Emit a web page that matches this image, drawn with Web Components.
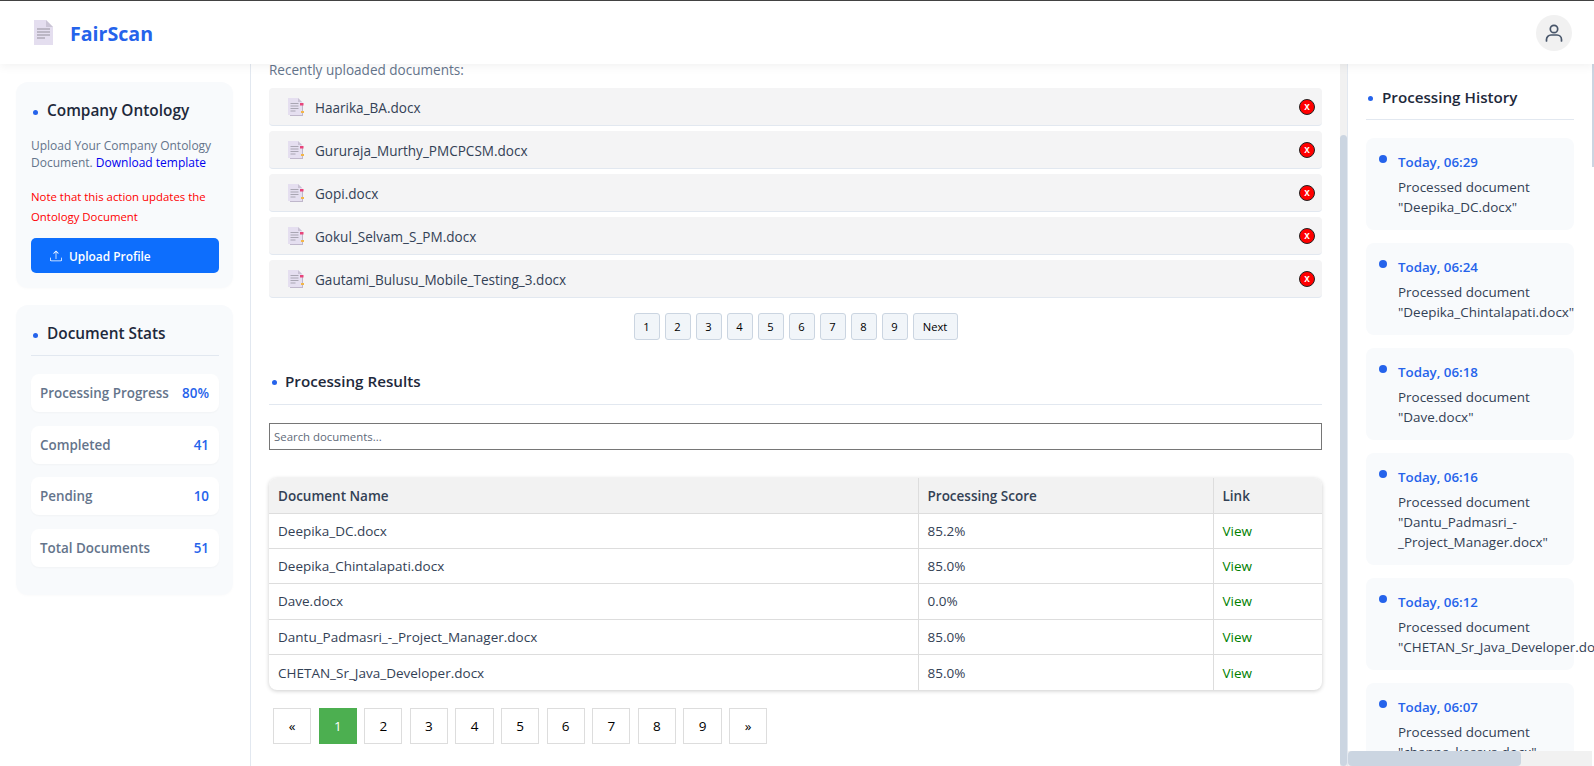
<!DOCTYPE html>
<html lang="en">
<head>
<meta charset="utf-8">
<title>FairScan</title>
<style>
  html, body { margin: 0; height: 100%; overflow: hidden; background: #fff; }
  body { font-family: "Open Sans", "Noto Sans", sans-serif; color: #334155; }
</style>
</head>
<body>
<fs-app>
  <fs-header slot="header"></fs-header>

  <fs-sidebar slot="left">
    <fs-card>
      <fs-title>Company Ontology</fs-title>
      <fs-ontology></fs-ontology>
    </fs-card>
    <fs-card>
      <fs-title ruled>Document Stats</fs-title>
      <fs-stat label="Processing Progress" value="80%"></fs-stat>
      <fs-stat label="Completed" value="41"></fs-stat>
      <fs-stat label="Pending" value="10"></fs-stat>
      <fs-stat label="Total Documents" value="51"></fs-stat>
    </fs-card>
  </fs-sidebar>

  <fs-main slot="center">
    <fs-uploads>
      <fs-doc name="Haarika_BA.docx"></fs-doc>
      <fs-doc name="Gururaja_Murthy_PMCPCSM.docx"></fs-doc>
      <fs-doc name="Gopi.docx"></fs-doc>
      <fs-doc name="Gokul_Selvam_S_PM.docx"></fs-doc>
      <fs-doc name="Gautami_Bulusu_Mobile_Testing_3.docx"></fs-doc>
    </fs-uploads>
    <fs-results></fs-results>
  </fs-main>

  <fs-history slot="right">
    <fs-history-item time="Today, 06:29" doc="Deepika_DC.docx"></fs-history-item>
    <fs-history-item time="Today, 06:24" doc="Deepika_Chintalapati.docx"></fs-history-item>
    <fs-history-item time="Today, 06:18" doc="Dave.docx"></fs-history-item>
    <fs-history-item time="Today, 06:16" doc="Dantu_Padmasri_-_Project_Manager.docx"></fs-history-item>
    <fs-history-item time="Today, 06:12" doc="CHETAN_Sr_Java_Developer.docx"></fs-history-item>
    <fs-history-item time="Today, 06:07" doc="channa_kesava.docx"></fs-history-item>
  </fs-history>
</fs-app>

<script>
const DOC_ICON = `<svg width="16" height="18" viewBox="0 0 16 18" aria-hidden="true">
  <path d="M2 1.500h9l4 4V18H2z" fill="#bfb7cb"/>
  <path d="M0 0h10l4 4v13H0z" fill="#e5dff0"/>
  <path d="M10 0l4 4h-4z" fill="#c9c2d4"/>
  <path d="M2.500 5.500h8M2.500 8h8M2.500 10.500h8M2.500 13h5" stroke="#a9a6b3" stroke-width="1"/>
  <rect x="12" y="5" width="3.500" height="2.500" fill="#e8447a"/>
  <rect x="13" y="13" width="3" height="2" fill="#f2b64a"/>
</svg>`

class FsApp extends HTMLElement {
  connectedCallback() {
    this.attachShadow({ mode: 'open' })
    this.shadowRoot.innerHTML = `
      <style>
        :host { display: flex; flex-direction: column; height: 766px; border-top: 1px solid #444; box-sizing: border-box; }
        .row { display: flex; flex: 1; min-height: 0; }
        ::slotted([slot=center]) { flex: 1; min-width: 0; }
      </style>
      <slot name="header"></slot>
      <div class="row">
        <slot name="left"></slot>
        <slot name="center"></slot>
        <slot name="right"></slot>
      </div>`
  }
}

class FsHeader extends HTMLElement {
  connectedCallback() {
    this.attachShadow({ mode: 'open' })
    this.shadowRoot.innerHTML = `
      <style>
        :host { display: flex; align-items: center; flex: none; height: 63px; padding: 0 22px 0 34px; background: #fff; box-shadow: 0 2px 10px rgba(0,0,0,.06); position: relative; z-index: 5; }
        .brand { font-size: 19.600px; font-weight: 700; color: #2563eb; margin-left: 17px; padding-top: 2px; }
        .avatar { margin-left: auto; width: 36px; height: 36px; border-radius: 50%; background: #f1f1f1; display: flex; align-items: center; justify-content: center; }
      </style>
      <svg width="19" height="25" viewBox="0 0 19 25" aria-hidden="true">
        <path d="M0 0h12l7 7v18H0z" fill="#e4deef"/>
        <path d="M12 0l7 7h-7z" fill="#cbc5d6"/>
        <path d="M3 9h13M3 12h13M3 15h13M3 18h8" stroke="#aeabb8" stroke-width="1.300"/>
      </svg>
      <span class="brand">FairScan</span>
      <div class="avatar">
        <svg width="24" height="24" viewBox="0 0 24 24" fill="none" stroke="#475569" stroke-width="1.700" stroke-linecap="round" aria-hidden="true">
          <circle cx="12" cy="8" r="3.700"/>
          <path d="M4.500 20v-1.500a4.500 4.500 0 0 1 4.500-4.500h6a4.500 4.500 0 0 1 4.500 4.500V20"/>
        </svg>
      </div>`
  }
}

class FsSidebar extends HTMLElement {
  connectedCallback() {
    this.attachShadow({ mode: 'open' })
    this.shadowRoot.innerHTML = `
      <style>
        :host { display: flex; flex-direction: column; gap: 17px; flex: none; box-sizing: border-box; width: 251px; padding: 18px 17px 0 16px; border-right: 1px solid #e2e8f0; background: #fff; }
      </style>
      <slot></slot>`
  }
}

class FsCard extends HTMLElement {
  connectedCallback() {
    this.attachShadow({ mode: 'open' })
    this.shadowRoot.innerHTML = `
      <style>
        :host { display: block; background: #f8fafc; border-radius: 12px; padding: 18px 14px 15px 15px; box-shadow: 0 1px 3px rgba(0,0,0,.02); }
      </style>
      <slot></slot>`
  }
}

class FsTitle extends HTMLElement {
  connectedCallback() {
    this.attachShadow({ mode: 'open' })
    this.shadowRoot.innerHTML = `
      <style>
        :host { display: flex; align-items: center; font-size: 15.400px; font-weight: 600; line-height: 22px; color: #1e293b; }
        :host([ruled]) { padding-bottom: 10px; border-bottom: 1px solid #e2e8f0; margin-bottom: 18px; }
        i { width: 5px; height: 5px; border-radius: 50%; background: #2563eb; margin: 2px 9px 0 2px; flex: none; }
      </style>
      <i></i><slot></slot>`
  }
}

class FsOntology extends HTMLElement {
  connectedCallback() {
    this.attachShadow({ mode: 'open' })
    this.shadowRoot.innerHTML = `
      <style>
        :host { display: block; font-size: 12px; color: #64748b; }
        p { margin: 0; }
        .lead { line-height: 17px; margin-top: 15px; }
        a { color: #0000ee; text-decoration: none; }
        .note { color: #f00; font-size: 11.400px; line-height: 20px; margin-top: 16px; }
        button { display: flex; align-items: center; width: 100%; height: 35px; margin-top: 11px; padding: 0 0 0 19px; border: 0; border-radius: 5px; background: #0d6efd; color: #fff; font: 600 11.900px "Open Sans", "Noto Sans", sans-serif; }
        svg { margin-right: 7px; }
      </style>
      <p class="lead">Upload Your Company Ontology Document. <a href="#">Download template</a></p>
      <p class="note">Note that this action updates the Ontology Document</p>
      <button type="button">
        <svg width="12" height="12" viewBox="0 0 16 16" fill="#fff" aria-hidden="true">
          <path d="M.5 9.900a.5.5 0 0 1 .5.5v2.500a1 1 0 0 0 1 1h12a1 1 0 0 0 1-1v-2.500a.5.5 0 0 1 1 0v2.500a2 2 0 0 1-2 2H2a2 2 0 0 1-2-2v-2.500a.5.5 0 0 1 .5-.5z"/>
          <path d="M7.650 1.150a.5.5 0 0 1 .7 0l3 3a.5.5 0 0 1-.7.7L8.500 2.700V11.500a.5.5 0 0 1-1 0V2.700L5.350 4.850a.5.5 0 1 1-.7-.7l3-3z"/>
        </svg>
        Upload Profile
      </button>`
  }
}

class FsStat extends HTMLElement {
  connectedCallback() {
    this.attachShadow({ mode: 'open' })
    this.shadowRoot.innerHTML = `
      <style>
        :host { display: flex; justify-content: space-between; align-items: center; height: 38px; box-sizing: border-box; padding: 0 10px 0 9px; margin-bottom: 13.600px; background: #fff; border-radius: 8px; box-shadow: 0 1px 2px rgba(0,0,0,.03); font-size: 13.400px; font-weight: 600; white-space: nowrap; }
        .l { color: #64748b; }
        .v { color: #2563eb; }
      </style>
      <span class="l">${this.getAttribute('label')}</span><span class="v">${this.getAttribute('value')}</span>`
  }
}

class FsUploads extends HTMLElement {
  connectedCallback() {
    this.attachShadow({ mode: 'open' })
    const pages = [1, 2, 3, 4, 5, 6, 7, 8, 9, 'Next']
    this.shadowRoot.innerHTML = `
      <style>
        :host { display: block; }
        .cap { font-size: 13.550px; line-height: 18px; color: #64748b; margin-bottom: 9px; }
        .list { display: flex; flex-direction: column; gap: 5px; }
        .pager { display: flex; justify-content: center; gap: 5px; margin-top: 15px; }
        button { width: 26px; height: 27px; padding: 0; box-sizing: border-box; background: #f1f5f9; border: 1px solid #cbd5e1; border-radius: 3px; color: #000; font: 11.200px "Open Sans", "Noto Sans", sans-serif; }
        button:last-child { width: 45px; }
      </style>
      <div class="cap">Recently uploaded documents:</div>
      <div class="list"><slot></slot></div>
      <div class="pager">${pages.map(p => `<button type="button">${p}</button>`).join('')}</div>`
  }
}

class FsDoc extends HTMLElement {
  connectedCallback() {
    this.attachShadow({ mode: 'open' })
    this.shadowRoot.innerHTML = `
      <style>
        :host { display: flex; align-items: center; height: 38px; box-sizing: border-box; padding: 0 7px 0 19px; background: #f4f4f5; border-bottom: 1px solid #e2e8f0; border-radius: 4px; font-size: 13.550px; color: #334155; }
        .n { margin-left: 11px; padding-top: 2px; }
        .x { margin-left: auto; width: 16px; height: 16px; box-sizing: border-box; border-radius: 50%; background: #f00; border: 1px solid #222; color: #fff; font: 700 10px/14px "Liberation Sans", sans-serif; text-align: center; }
      </style>
      ${DOC_ICON}<span class="n">${this.getAttribute('name')}</span><span class="x">x</span>`
  }
}

class FsResults extends HTMLElement {
  connectedCallback() {
    this.attachShadow({ mode: 'open' })
    const rows = [
      ['Deepika_DC.docx', '85.2%'],
      ['Deepika_Chintalapati.docx', '85.0%'],
      ['Dave.docx', '0.0%'],
      ['Dantu_Padmasri_-_Project_Manager.docx', '85.0%'],
      ['CHETAN_Sr_Java_Developer.docx', '85.0%']
    ]
    const pages = ['«', 1, 2, 3, 4, 5, 6, 7, 8, 9, '»']
    this.shadowRoot.innerHTML = `
      <style>
        :host { display: block; margin-top: 30px; padding-bottom: 22px; }
        .head { display: flex; align-items: center; font-size: 15.200px; font-weight: 600; line-height: 22px; color: #1e293b; padding-bottom: 12px; border-bottom: 1px solid #e2e8f0; }
        .head i { width: 5px; height: 5px; border-radius: 50%; background: #2563eb; margin: 2px 8px 0 3px; }
        input { display: block; width: 100%; height: 27px; box-sizing: border-box; margin-top: 18px; padding: 0 4px; border: 1px solid #767676; font: 11.400px "Open Sans", "Noto Sans", sans-serif; outline: 0; }
        input::placeholder { color: #5f6b7a; }
        .wrap { margin-top: 28px; border-radius: 8px; overflow: hidden; box-shadow: 0 1px 4px rgba(0,0,0,.2); }
        table { width: 100%; table-layout: fixed; border-collapse: collapse; font-size: 13.500px; color: #334155; }
        th, td { padding: 0 8px 0 9px; box-sizing: border-box; text-align: left; border-bottom: 1px solid #ddd; border-right: 1px solid #ddd; }
        th { height: 35px; padding-top: 2px; background: #f2f2f2; font-weight: 600; }
        td { height: 35.400px; }
        th:last-child, td:last-child { border-right: 0; }
        tr:last-child td { border-bottom: 0; }
        a { color: #008000; text-decoration: none; }
        .pages { display: flex; gap: 7.300px; margin: 18px 0 0 4px; }
        .pages span { width: 38.300px; height: 36px; box-sizing: border-box; display: flex; align-items: center; justify-content: center; border: 1px solid #ddd; color: #000; font-size: 13.500px; }
        .pages .on { background: #4caf50; border-color: #4caf50; color: #fff; }
      </style>
      <div class="head"><i></i>Processing Results</div>
      <input type="text" placeholder="Search documents...">
      <div class="wrap">
        <table>
          <colgroup><col style="width:649px"><col style="width:295px"><col></colgroup>
          <thead><tr><th>Document Name</th><th>Processing Score</th><th>Link</th></tr></thead>
          <tbody>${rows.map(r => `<tr><td>${r[0]}</td><td>${r[1]}</td><td><a href="#">View</a></td></tr>`).join('')}</tbody>
        </table>
      </div>
      <div class="pages">${pages.map(p => `<span class="${p === 1 ? 'on' : ''}">${p}</span>`).join('')}</div>`
  }
}

class FsHistoryItem extends HTMLElement {
  connectedCallback() {
    this.attachShadow({ mode: 'open' })
    this.shadowRoot.innerHTML = `
      <style>
        :host { display: block; width: 208px; box-sizing: border-box; position: relative; padding: 14px 13px 13px 32px; margin-bottom: 13px; background: #f8fafc; border-radius: 8px; font-size: 13.450px; line-height: 20px; color: #334155; }
        i { position: absolute; left: 13px; top: 17px; width: 8px; height: 8px; border-radius: 50%; background: #2563eb; }
        .t { color: #2563eb; font-size: 13.300px; font-weight: 600; margin-bottom: 5px; }
      </style>
      <i></i>
      <div class="t">${this.getAttribute('time')}</div>
      <div>Processed document "${this.getAttribute('doc')}"</div>`
  }
}

class FsHistory extends HTMLElement {
  connectedCallback() {
    this.attachShadow({ mode: 'open' })
    this.shadowRoot.innerHTML = `
      <style>
        :host { display: block; flex: none; position: relative; box-sizing: border-box; width: 247px; border-left: 1px solid #e2e8f0; background: #fff; min-height: 0; overflow: hidden; }
        .scroll { height: 100%; overflow: hidden; box-sizing: border-box; padding: 22px 0 0 18px; }
        .head { display: flex; align-items: center; width: 208px; font-size: 15.200px; font-weight: 600; line-height: 22px; color: #1e293b; padding-bottom: 11px; border-bottom: 1px solid #e2e8f0; margin-bottom: 18px; }
        .head i { width: 5px; height: 5px; border-radius: 50%; background: #2563eb; margin: 2px 9px 0 2px; }
        /* scrollbars sit over the panel, headless chrome would not paint real ones */
        .vbar { position: absolute; top: 0; right: 0; width: 2px; height: 103px; background: #cbd5e1; }
        .hbar { position: absolute; left: 0; right: 2px; bottom: 0; height: 15px; background: #f1f1f1; }
        .hbar b { display: block; width: 173px; height: 100%; background: #cbd5e1; border-radius: 4px; }
      </style>
      <div class="scroll">
        <div class="head"><i></i>Processing History</div>
        <slot></slot>
      </div>
      <div class="vbar"></div>
      <div class="hbar"><b></b></div>`
  }
}

class FsMain extends HTMLElement {
  connectedCallback() {
    this.attachShadow({ mode: 'open' })
    this.shadowRoot.innerHTML = `
      <style>
        :host { display: block; position: relative; min-height: 0; }
        .scroll { height: 100%; overflow: hidden; box-sizing: border-box; padding: 76px 25px 0 18px; }
        .track { position: absolute; top: 0; right: 0; bottom: 0; width: 7px; background: #f1f1f1; }
        .track b { position: absolute; top: 71px; left: 0; right: 0; bottom: 0; background: #cbd5e1; border-radius: 4px; }
      </style>
      <div class="scroll"><slot></slot></div>
      <div class="track"><b></b></div>`
    // the reference is photographed scrolled to the end of the column
    const box = this.shadowRoot.querySelector('.scroll')
    box.scrollTop = box.scrollHeight
  }
}

customElements.define('fs-app', FsApp)
customElements.define('fs-header', FsHeader)
customElements.define('fs-sidebar', FsSidebar)
customElements.define('fs-card', FsCard)
customElements.define('fs-title', FsTitle)
customElements.define('fs-ontology', FsOntology)
customElements.define('fs-stat', FsStat)
customElements.define('fs-uploads', FsUploads)
customElements.define('fs-doc', FsDoc)
customElements.define('fs-results', FsResults)
customElements.define('fs-history-item', FsHistoryItem)
customElements.define('fs-history', FsHistory)
customElements.define('fs-main', FsMain)
</script>
</body>
</html>
